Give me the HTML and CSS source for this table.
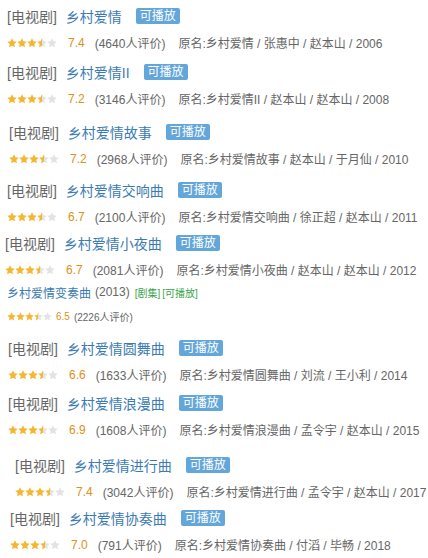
FILE: index.html
```html
<!DOCTYPE html>
<html>
  <head>
    <meta charset="utf-8">
    <title>乡村爱情</title>
    <link rel="stylesheet" href="styles.css">
  </head>
  <body>
    <svg class="defs" width="0" height="0">
      <defs>
        <linearGradient id="half">
          <stop offset="50%" stop-color="#f5b631"/>
          <stop offset="50%" stop-color="#e3e3e3"/>
        </linearGradient>
        <symbol id="star" viewBox="0 0 10 10">
          <path d="M5 0.3l1.45 3.05 3.3 0.4-2.45 2.3 0.65 3.3L5 7.7 2.05 9.35l0.65-3.3L0.25 3.75l3.3-0.4z"/>
        </symbol>
      </defs>
    </svg>

    <ul class="list">
      <li class="item r1">
        <div class="head"><span class="type">[电视剧]</span><a class="name" href="javascript:void(0)">乡村爱情</a><span class="play">可播放</span></div>
        <div class="meta"><span class="stars"></span><span class="score">7.4</span><span class="count">(4640人评价)</span><span class="info">原名:乡村爱情 / 张惠中 / 赵本山 / 2006</span></div>
      </li>
      <li class="item r2">
        <div class="head"><span class="type">[电视剧]</span><a class="name" href="javascript:void(0)">乡村爱情II</a><span class="play">可播放</span></div>
        <div class="meta"><span class="stars"></span><span class="score">7.2</span><span class="count">(3146人评价)</span><span class="info">原名:乡村爱情II / 赵本山 / 赵本山 / 2008</span></div>
      </li>
      <li class="item r3">
        <div class="head"><span class="type">[电视剧]</span><a class="name" href="javascript:void(0)">乡村爱情故事</a><span class="play">可播放</span></div>
        <div class="meta"><span class="stars"></span><span class="score">7.2</span><span class="count">(2968人评价)</span><span class="info">原名:乡村爱情故事 / 赵本山 / 于月仙 / 2010</span></div>
      </li>
      <li class="item r4">
        <div class="head"><span class="type">[电视剧]</span><a class="name" href="javascript:void(0)">乡村爱情交响曲</a><span class="play">可播放</span></div>
        <div class="meta"><span class="stars"></span><span class="score">6.7</span><span class="count">(2100人评价)</span><span class="info">原名:乡村爱情交响曲 / 徐正超 / 赵本山 / 2011</span></div>
      </li>
      <li class="item r5">
        <div class="head"><span class="type">[电视剧]</span><a class="name" href="javascript:void(0)">乡村爱情小夜曲</a><span class="play">可播放</span></div>
        <div class="meta"><span class="stars"></span><span class="score">6.7</span><span class="count">(2081人评价)</span><span class="info">原名:乡村爱情小夜曲 / 赵本山 / 赵本山 / 2012</span></div>
      </li>
      <li class="item small r6">
        <div class="head"><a class="name" href="javascript:void(0)">乡村爱情变奏曲</a><span class="year">(2013)</span><span class="tag">[剧集]</span><span class="tag">[可播放]</span></div>
        <div class="meta"><span class="stars"></span><span class="score">6.5</span><span class="count">(2226人评价)</span></div>
      </li>
      <li class="item r7">
        <div class="head"><span class="type">[电视剧]</span><a class="name" href="javascript:void(0)">乡村爱情圆舞曲</a><span class="play">可播放</span></div>
        <div class="meta"><span class="stars"></span><span class="score">6.6</span><span class="count">(1633人评价)</span><span class="info">原名:乡村爱情圆舞曲 / 刘流 / 王小利 / 2014</span></div>
      </li>
      <li class="item r8">
        <div class="head"><span class="type">[电视剧]</span><a class="name" href="javascript:void(0)">乡村爱情浪漫曲</a><span class="play">可播放</span></div>
        <div class="meta"><span class="stars"></span><span class="score">6.9</span><span class="count">(1608人评价)</span><span class="info">原名:乡村爱情浪漫曲 / 孟令宇 / 赵本山 / 2015</span></div>
      </li>
      <li class="item r9">
        <div class="head"><span class="type">[电视剧]</span><a class="name" href="javascript:void(0)">乡村爱情进行曲</a><span class="play">可播放</span></div>
        <div class="meta"><span class="stars"></span><span class="score">7.4</span><span class="count">(3042人评价)</span><span class="info">原名:乡村爱情进行曲 / 孟令宇 / 赵本山 / 2017</span></div>
      </li>
      <li class="item r10">
        <div class="head"><span class="type">[电视剧]</span><a class="name" href="javascript:void(0)">乡村爱情协奏曲</a><span class="play">可播放</span></div>
        <div class="meta"><span class="stars"></span><span class="score">7.0</span><span class="count">(791人评价)</span><span class="info">原名:乡村爱情协奏曲 / 付滔 / 毕畅 / 2018</span></div>
      </li>
    </ul>

    <script>
      var aStars = document.querySelectorAll('.stars');
      var sFill = ['#f5b631','#f5b631','#f5b631','url(#half)','#e3e3e3'];
      for (var i=0; i<aStars.length; i++) {
        var sHtml = '';
        for (var j=0; j<5; j++) {
          sHtml += '<svg class="star" viewBox="0 0 10 10"><use href="#star" fill="'+sFill[j]+'"/></svg>';
        }
        aStars[i].innerHTML = sHtml;
      }
    </script>
  </body>
</html>
```

FILE: styles.css
```css
*{margin: 0;padding: 0;}
ul {list-style: none;}
body {
  background: #fff;
  font-family: "Liberation Sans", Arial, "Noto Sans CJK SC", sans-serif;
  color: #666;
}
a {text-decoration: none;}
.defs {position: absolute;}

.list {width: 428px;}
.item {display: flex;flex-direction: column;}

.head {display: flex;align-items: center;height: 26px;font-size: 14px;}
.type {color: #666;margin-right: 9px;}
.name {color: #3b7bb2;margin-right: 14px;}
.play {
  background: #63a6d9;
  color: #fff;
  font-size: 12px;
  line-height: 16px;
  padding: 0 4px;
  border-radius: 2px;
}

.meta {display: flex;align-items: center;height: 27px;font-size: 12px;}
.stars {display: flex;width: 50px;margin-right: 11px;}
.star {width: 10px;height: 10px;display: block;}
.score {color: #e09015;margin-right: 10px;}
.count {color: #666;margin-right: 13px;}
.info {color: #666;}

.small .head {height: 18px;font-size: 12px;}
.small .name {margin-right: 4px;}
.year {color: #666;margin-right: 5px;}
.tag {color: #3aa54a;font-size: 10px;margin-right: 2px;}
.small .meta {height: 20px;font-size: 10px;margin-top: 5px;}
.small .stars {width: 45px;margin-right: 4px;}
.small .star {width: 9px;height: 9px;}
.small .score {margin-right: 4px;}

.r1 {padding-left: 7px;margin-top: 3px;}
.r2 {padding-left: 7px;margin-top: 3px;}
.r3 {padding-left: 9px;margin-top: 7px;}
.r4 {padding-left: 7px;margin-top: 5px;}
.r5 {padding-left: 5px;margin-top: 0;}
.r6 {padding-left: 7px;margin-top: 0;}
.r7 {padding-left: 8px;margin-top: 9px;}
.r8 {padding-left: 8px;margin-top: 2px;}
.r9 {padding-left: 15px;margin-top: 9px;}
.r10 {padding-left: 10px;margin-top: 0;}
```
